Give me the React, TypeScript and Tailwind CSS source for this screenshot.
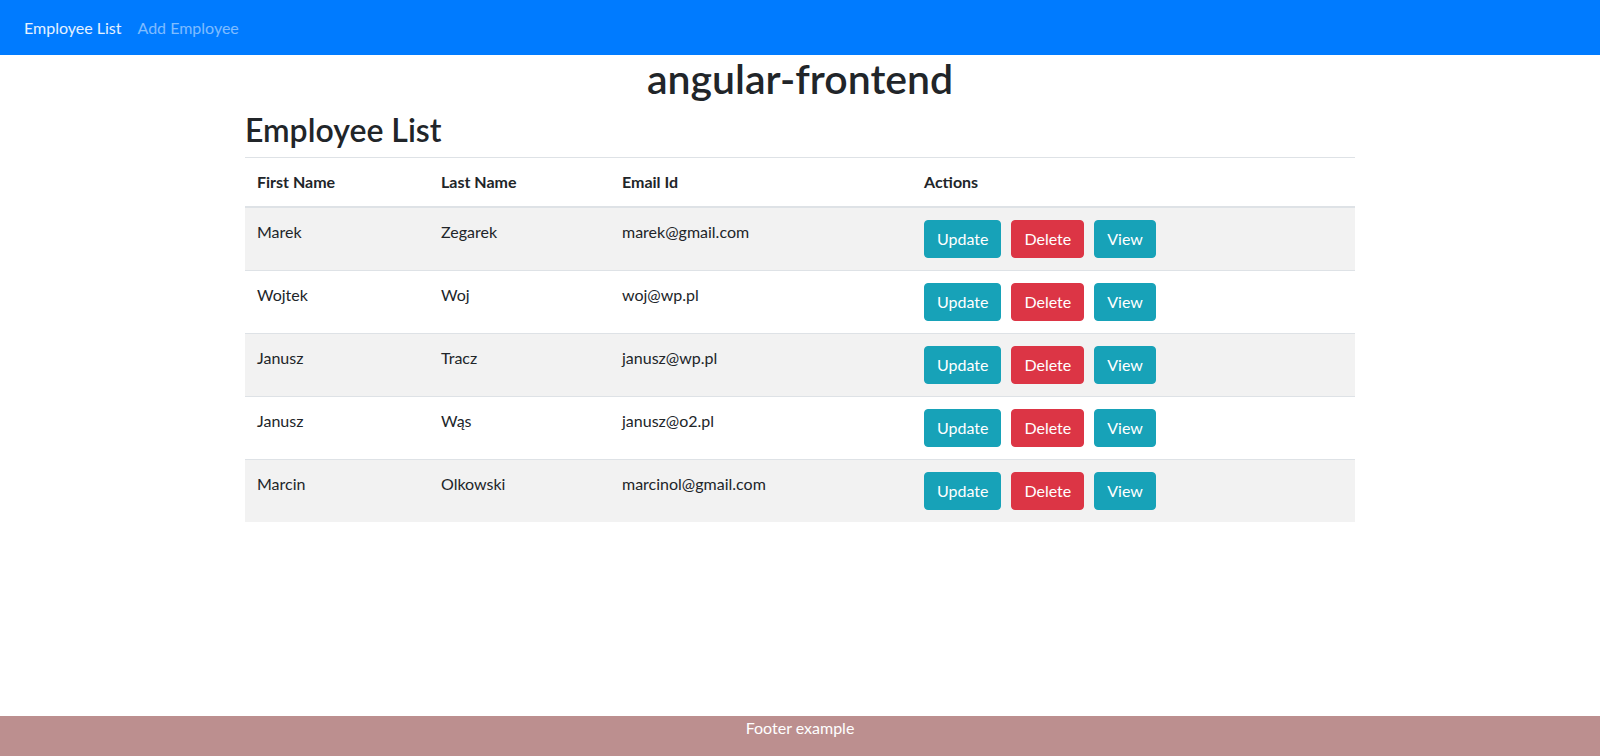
import React from "react";

const employees = [
  { first: "Marek", last: "Zegarek", email: "marek@gmail.com" },
  { first: "Wojtek", last: "Woj", email: "woj@wp.pl" },
  { first: "Janusz", last: "Tracz", email: "janusz@wp.pl" },
  { first: "Janusz", last: "Wąs", email: "janusz@o2.pl" },
  { first: "Marcin", last: "Olkowski", email: "marcinol@gmail.com" },
];

export default function App() {
  return (
    <div
      className="flex min-h-screen flex-col bg-white text-[#212529]"
      style={{ fontFamily: "Lato, 'Noto Sans', sans-serif" }}
    >
      <nav className="flex h-[55px] items-center bg-[#007bff] px-4">
        <a className="px-2 text-base leading-6 text-white/90">Employee List</a>
        <a className="px-2 text-base leading-6 text-white/50">Add Employee</a>
      </nav>
      <main className="flex-1">
        <h1 className="mb-2 text-center text-[41px] font-semibold leading-[48px]">angular-frontend</h1>
        <div className="mx-auto w-[1140px] px-[15px]">
          <h2 className="mb-2 text-[32px] font-semibold leading-[38px]">Employee List</h2>
          <table className="w-full border-collapse text-base leading-6">
            <thead>
              <tr className="border-t border-[#dee2e6]">
                <th className="w-[184px] border-b-2 border-[#dee2e6] p-3 text-left font-bold">First Name</th>
                <th className="w-[181px] border-b-2 border-[#dee2e6] p-3 text-left font-bold">Last Name</th>
                <th className="w-[302px] border-b-2 border-[#dee2e6] p-3 text-left font-bold">Email Id</th>
                <th className="border-b-2 border-[#dee2e6] p-3 text-left font-bold">Actions</th>
              </tr>
            </thead>
            <tbody>
              {employees.map((e, i) => (
                <tr
                  key={i}
                  className={`${i === 0 ? "" : "border-t border-[#dee2e6]"} ${i % 2 === 0 ? "bg-[#f2f2f2]" : "bg-white"}`}
                >
                  <td className="p-3 align-top">{e.first}</td>
                  <td className="p-3 align-top">{e.last}</td>
                  <td className="p-3 align-top">{e.email}</td>
                  <td className="p-3 align-top">
                    <div className="flex gap-[10px]">
                      <button className="rounded border border-[#17a2b8] bg-[#17a2b8] px-3 py-1.5 text-base leading-6 text-white">Update</button>
                      <button className="rounded border border-[#dc3545] bg-[#dc3545] px-3 py-1.5 text-base leading-6 text-white">Delete</button>
                      <button className="rounded border border-[#17a2b8] bg-[#17a2b8] px-3 py-1.5 text-base leading-6 text-white">View</button>
                    </div>
                  </td>
                </tr>
              ))}
            </tbody>
          </table>
        </div>
      </main>
      <footer className="h-10 bg-[#bc8f8f] text-center text-base leading-6 text-white">Footer example</footer>
    </div>
  );
}
